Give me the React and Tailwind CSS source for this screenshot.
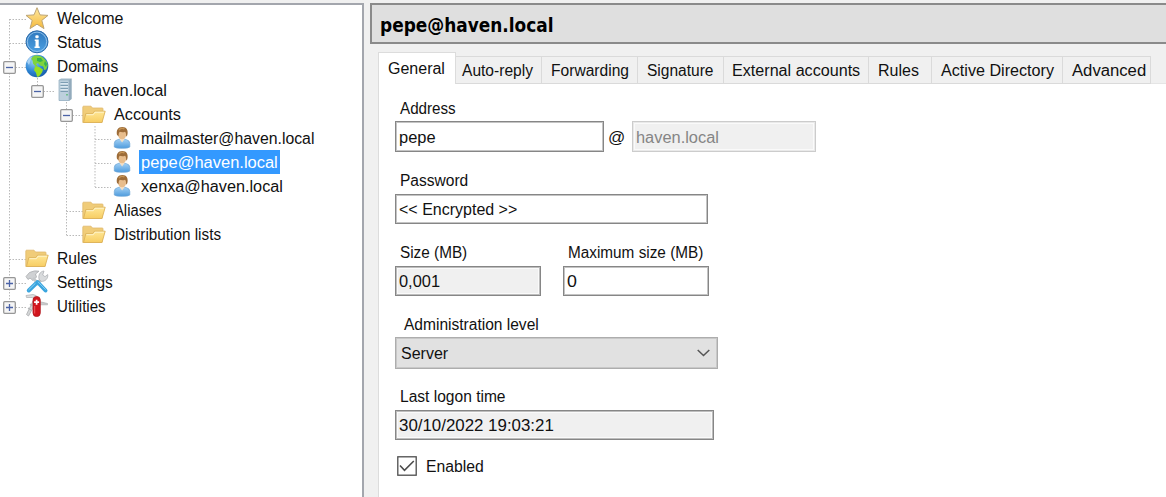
import React, { useLayoutEffect, useRef, useState } from "react";

// Text condensed or widened to a given width
function Fit({ w, children, className = "" }) {
  const ref = useRef(null);
  const [scale, setScale] = useState(1);
  useLayoutEffect(() => {
    setScale(w / ref.current.offsetWidth);
  }, [w]);
  return (
    <span className="block shrink-0" style={{ width: w }}>
      <span
        ref={ref}
        className={"inline-block origin-left whitespace-pre " + className}
        style={{ transform: `translateY(1px) scaleX(${scale})` }}
      >
        {children}
      </span>
    </span>
  );
}

const Star = () => (
  <svg viewBox="0 0 24 24" className="size-6">
    <defs>
      <linearGradient id="star" x1="0" y1="0" x2="0" y2="1">
        <stop offset="0" stopColor="#ffe9a0" />
        <stop offset="1" stopColor="#f4b93c" />
      </linearGradient>
    </defs>
    <path d="M12 1.700l3 7.200 8 .5-6.200 5 2.200 8.200L12 18.200 5 22.600l2.200-8.200-6.200-5 8-.5z" fill="url(#star)" stroke="#bda474" strokeWidth="1" strokeLinejoin="round" />
  </svg>
);

const Info = () => (
  <svg viewBox="0 0 24 24" className="size-6">
    <defs>
      <linearGradient id="info" x1="0" y1="0" x2="0" y2="1">
        <stop offset="0" stopColor="#2f78bd" />
        <stop offset="1" stopColor="#4ba0e3" />
      </linearGradient>
    </defs>
    <circle cx="12" cy="11.800" r="11" fill="url(#info)" stroke="#2d6cab" strokeWidth="1" />
    <circle cx="12" cy="11.800" r="9.700" fill="none" stroke="#8fc0ea" strokeWidth="1" />
    <rect x="10.300" y="5.300" width="3.400" height="3" rx="1.200" fill="#fff" />
    <path d="M9.700 9.500h4v7h1v1.500H9.500v-1.500h1v-5.500h-.8z" fill="#fff" />
  </svg>
);

const Globe = () => (
  <svg viewBox="0 0 24 24" className="size-6">
    <defs>
      <radialGradient id="globe" cx=".35" cy=".3" r=".8">
        <stop offset="0" stopColor="#9ccdf5" />
        <stop offset=".55" stopColor="#2d86d5" />
        <stop offset="1" stopColor="#1557a4" />
      </radialGradient>
    </defs>
    <circle cx="12" cy="12" r="11.300" fill="url(#globe)" />
    <path d="M9 1.800c3-1 7 0 9 1.700 3 2.500 4.500 5 4.700 8l-1.500 4-2 .500-1-3.500-3-1-2.200-2.500-2 1 1.500 2 .500 1-2.500-.5-2.500-3-.5-3L6 4.500z" fill="#7fd43c" />
    <path d="M10 12.500l4 .500 4 2.500-1 3-3 4-2 .300-1-4-2-2.500z" fill="#98df20" />
    <path d="M12 4l4 0 2 3-3 1-3-1z" fill="#37b34c" />
    <path d="M20 7l2 3-1 3-2-3z" fill="#35ae55" />
    <path d="M2 8c1-3 3-5 5-5.500L5 8l-1 3z" fill="#b9dcf7" opacity=".8" />
  </svg>
);

const Server = () => (
  <svg viewBox="0 0 24 24" className="size-6">
    <path d="M6 2l2-1.500h10.500v20.500l-2 1.700H6z" fill="#a4bccb" />
    <path d="M6 2h10v20.500H6z" fill="#bdd0dd" />
    <path d="M16 2l2.500-1.500v20.500L16 22.500z" fill="#93abbc" />
    <path d="M7.500 4.500h7.500M7.500 7.500h7.500M7.500 10.500h7.500M7.500 13.500h7.500" stroke="#7d9db3" strokeWidth="1.200" />
    <path d="M7.500 5.700h7.500M7.500 8.700h7.500M7.500 11.700h7.500" stroke="#e2edf4" strokeWidth="1" />
    <rect x="13" y="16" width="2" height="1.500" fill="#6fbf8c" />
    <path d="M6 2h10v20.500H6z" fill="none" stroke="#9bb3c4" strokeWidth=".8" />
  </svg>
);

const Folder = () => (
  <svg viewBox="0 0 24 24" className="size-6">
    <defs>
      <linearGradient id="folder" x1="0" y1="0" x2="0" y2="1">
        <stop offset="0" stopColor="#ffe795" />
        <stop offset="1" stopColor="#f7cd63" />
      </linearGradient>
    </defs>
    <path d="M.8 20.500V5q0-.8.8-.8h7.400l1.500 1.800h9.700q.8 0 .8.800V10l-1 10.500z" fill="#f0cc79" stroke="#dfb96c" strokeWidth=".8" />
    <path d="M1.500 20.500L3.800 11.700h7l1.700-2.500h10.700L20 20.500z" fill="url(#folder)" stroke="#dcb25a" strokeWidth=".9" strokeLinejoin="round" />
    <path d="M4.400 12.700h6.900l1.700-2.500h8.900" fill="none" stroke="#fff6d2" strokeWidth=".9" />
  </svg>
);

const Person = () => (
  <svg viewBox="0 0 24 24" className="size-6">
    <defs>
      <linearGradient id="shirt" x1="0" y1="0" x2="0" y2="1">
        <stop offset="0" stopColor="#a5d2f5" />
        <stop offset="1" stopColor="#4e9bdd" />
      </linearGradient>
    </defs>
    <path d="M4.300 21V17.500q0-3 3.200-3.800L10 13h4l2.500.7q3.300.8 3.300 3.800V21q-1 1.300-7.700 1.300T4.300 21z" fill="url(#shirt)" stroke="#6ba5d5" strokeWidth=".7" />
    <path d="M9.500 13l2.600 3.500 2.600-3.500-.7-2h-3.800z" fill="#f4dfc5" />
    <ellipse cx="12.100" cy="8" rx="4.300" ry="5.300" fill="#e8bd8c" />
    <path d="M7 9C6 4 8 1 12.300 1s6.300 3.500 5 8.300l-1.300 1.500c.3-2.500 0-4-1-5-2 .9-4 .5-5.300 0-1 1.200-1.200 2.500-1 4.500z" fill="#9d6c38" />
    <path d="M9 4.300c1-2 4-2.500 5.500-1.300" fill="none" stroke="#c69555" strokeWidth="1.200" />
  </svg>
);

const Tools = () => (
  <svg viewBox="0 0 24 24" className="size-6">
    <path d="M11 14.500L17 9" stroke="#c3c6c9" strokeWidth="3.600" />
    <path d="M14.200 9.500c-1.200-4 .5-8 4.800-8.500l-1.300 4 2.300 1.700 2.700-2.200c.8 4-2.700 7.300-6.300 6.800z" fill="#d9dbdd" stroke="#b0b3b6" strokeWidth=".8" />
    <path d="M1 6.500L4.500 2.500q5-2.500 9.500-1.300L10.500 4l1 3L8 10.500 5 8 3 9.500z" fill="#cfd1d3" stroke="#a9acaf" strokeWidth=".8" />
    <path d="M8 8l4 4.500" stroke="#c5c8ca" strokeWidth="3" />
    <path d="M3.800 20.500L11 13.500" stroke="#3aa5de" strokeWidth="4" strokeLinecap="round" />
    <path d="M3.500 20L10.500 13.200" stroke="#8ed2f4" strokeWidth="1" />
    <path d="M12.500 12l8 8.500" stroke="#3aa5de" strokeWidth="4" strokeLinecap="round" />
    <path d="M13 11.800l7.700 8" stroke="#83cdf4" strokeWidth="1" />
  </svg>
);

const Knife = () => (
  <svg viewBox="0 0 24 24" className="size-6">
    <path d="M1 1.500L8 .5q4 .5 5 3.500l-2.500 2L7 3.500H1.500z" fill="#dcdedf" stroke="#b3b5b7" strokeWidth=".8" />
    <path d="M8 7L1.500 20.500l2 1.500L8.500 13z" fill="#d5d7d8" stroke="#a9abad" strokeWidth=".8" />
    <path d="M3 14l3 2M5 10l2 2" stroke="#b4b6b8" strokeWidth="1.200" />
    <path d="M14 7.500l8.500 2v1.300H14z" fill="#cacccd" stroke="#aeb0b2" strokeWidth=".7" />
    <rect x="8" y="2.500" width="7.300" height="20" rx="3.600" fill="#d2151d" stroke="#ae1a20" strokeWidth=".8" />
    <path d="M9.700 12v7.500" stroke="#ef5c60" strokeWidth="1" />
    <path d="M11.600 5.700v5M9.100 8.200h5" stroke="#fff" strokeWidth="1.700" />
  </svg>
);

const Toggle = ({ kind }) => (
  <svg viewBox="0 0 13 13" className="relative top-[1px] size-[13px] shrink-0">
    {kind && (
      <>
        <rect x=".7" y=".7" width="11.600" height="11.600" rx="1" fill="#f5f5f5" stroke="#979797" strokeWidth="1.300" />
        <path d={kind === "plus" ? "M3 6.500h7M6.500 3v7" : "M3 6.500h7"} stroke="#4b63a7" strokeWidth="1.300" />
      </>
    )}
  </svg>
);

const rows = [
  { t: "Welcome", w: 66, I: Star, pad: "pl-[3px]", label: "ml-[7px]" },
  { t: "Status", w: 44, I: Info, pad: "pl-[3px]", label: "ml-[7px]" },
  { t: "Domains", w: 61, I: Globe, pad: "pl-[3px]", label: "ml-[7px]", k: "minus" },
  { t: "haven.local", w: 83, I: Server, pad: "pl-[31px]", label: "ml-[6px]", k: "minus" },
  { t: "Accounts", w: 67, I: Folder, pad: "pl-[60px]", label: "ml-[7px]", k: "minus" },
  { t: "mailmaster@haven.local", w: 173, I: Person, pad: "pl-[88px]", label: "ml-[6px]" },
  { t: "pepe@haven.local", w: 137, I: Person, pad: "pl-[88px]", label: "ml-[5px] bg-[#3399ff] text-white", sel: true },
  { t: "xenxa@haven.local", w: 142, I: Person, pad: "pl-[88px]", label: "ml-[6px]" },
  { t: "Aliases", w: 48, I: Folder, pad: "pl-[60px]", label: "ml-[7px]" },
  { t: "Distribution lists", w: 107, I: Folder, pad: "pl-[60px]", label: "ml-[7px]" },
  { t: "Rules", w: 40, I: Folder, pad: "pl-[3px]", label: "ml-[7px]" },
  { t: "Settings", w: 56, I: Tools, pad: "pl-[3px]", label: "ml-[7px]", k: "plus" },
  { t: "Utilities", w: 49, I: Knife, pad: "pl-[3px]", label: "ml-[7px]", k: "plus" },
];

const tabs = [
  { t: "Auto-reply", w: 71, c: "w-[86px] pl-[6px]" },
  { t: "Forwarding", w: 78, c: "w-[96px] pl-[9px]" },
  { t: "Signature", w: 67, c: "w-[86px] pl-[9px]" },
  { t: "External accounts", w: 128, c: "w-[145px] pl-[8px]" },
  { t: "Rules", w: 41, c: "w-[63px] pl-[9px]" },
  { t: "Active Directory", w: 113, c: "w-[131px] pl-[9px]" },
  { t: "Advanced", w: 74, c: "w-[88px] pl-[9px]" },
];

function Tree() {
  return (
    <nav className="relative mt-[3px] h-[494px] w-[364px] shrink-0 border-t-2 border-r-2 border-[#a3a6ad] bg-white pt-[1px]">
      <svg viewBox="0 0 140 320" className="absolute top-[-5px] left-0 h-[320px] w-[140px]" fill="none" stroke="#b9b9b9" strokeDasharray="1.500 1.500">
        <path d="M9.500 19V307M9.500 19.500H26M9.500 43.500H26M9.500 67.500H26M9.500 259.500H26M9.500 283.500H26M9.500 307.500H26" />
        <path d="M37.500 78V91M37.500 91.500H54M66.500 102V235M66.500 115.500H83M66.500 211.500H83M66.500 235.500H83" />
        <path d="M95 126V187M95 139.500H111M95 163.500H111M95 187.500H111" />
      </svg>
      {rows.map(({ t, w, I, pad, label, k, sel }) => (
        <div key={t} className={"relative flex h-6 items-center " + pad}>
          <Toggle kind={k} />
          <span className="ml-[9px] size-6 shrink-0"><I /></span>
          <span className={"flex h-6 items-center " + label + (sel ? " px-[2px]" : " pl-px")}>
            <Fit w={w}>{t}</Fit>
          </span>
        </div>
      ))}
    </nav>
  );
}

const box = "flex items-center border border-[#868686] pl-[3px]";
const soft = " shadow-[inset_0_0_0_1px_#c4c4c4]";
const softReadOnly = " shadow-[inset_0_0_0_1px_#bdbdbd,inset_0_0_0_2px_#fafafa]";

export default function App() {
  return (
    <div className="flex h-[497px] w-[1166px] overflow-hidden bg-[#f0f0f0] font-['Liberation_Sans',sans-serif] text-[16px] leading-6 text-[#111]">
      <Tree />
      <main className="flex min-w-0 grow flex-col pt-[3px] pl-[6px]">
        <header className="flex h-[41px] shrink-0 items-center border-2 border-r-0 border-[#8a8a8a] bg-[#dfdfdf] pl-[8px] font-['DejaVu_Sans',sans-serif] text-[19px] font-bold text-black">
          <div className="pt-px"><Fit w={174}>pepe@haven.local</Fit></div>
        </header>
        <div className="ml-[8px] flex h-[40px] shrink-0 items-end">
          <div className="flex h-[32px] w-[78px] shrink-0 border border-b-0 border-[#dcdcdc] bg-white pl-[9px] pt-[3px]">
            <Fit w={57}>General</Fit>
          </div>
          {tabs.map(({ t, w, c }) => (
            <div key={t} className={"flex h-[28px] shrink-0 items-center border-y border-r border-[#dadada] " + c}>
              <Fit w={w}>{t}</Fit>
            </div>
          ))}
          <div className="h-px grow bg-[#e5e5e5]" />
        </div>
        <section className="ml-[8px] flex grow flex-col items-start border-l border-[#dcdcdc] bg-white pt-[12px] pl-[16px]">
          <div className="pl-[5px]"><Fit w={56}>Address</Fit></div>
          <div className="mt-[1px] flex h-[31px] items-center">
            <div className={box + soft + " h-[31px] w-[209px] bg-white"}><Fit w={37}>pepe</Fit></div>
            <div className="ml-[4px]"><Fit w={17}>@</Fit></div>
            <div className="ml-[7px] flex h-[31px] w-[184px] items-center border border-[#cccccc] bg-[#f0f0f0] pl-[3px] text-[#858585] shadow-[inset_0_0_0_1px_#e9e9e9,inset_0_0_0_2px_#fafafa]">
              <Fit w={83}>haven.local</Fit>
            </div>
          </div>
          <div className="mt-[16px] pl-[5px]"><Fit w={68}>Password</Fit></div>
          <div className={box + soft + " mt-[2px] h-[30px] w-[313px] bg-white"}><Fit w={118}>{"<< Encrypted >>"}</Fit></div>
          <div className="mt-[16px] flex">
            <div className="w-[168px] pl-[5px]"><Fit w={67}>Size (MB)</Fit></div>
            <div className="pl-[5px]"><Fit w={135}>Maximum size (MB)</Fit></div>
          </div>
          <div className="mt-[2px] flex gap-[22px]">
            <div className={box + softReadOnly + " h-[30px] w-[146px] bg-[#f0f0f0]"}><Fit w={41}>0,001</Fit></div>
            <div className={box + soft + " h-[30px] w-[146px] bg-white"}><Fit w={10}>0</Fit></div>
          </div>
          <div className="mt-[16px] pl-[9px]"><Fit w={135}>Administration level</Fit></div>
          <div className="mt-[1px] flex h-[32px] w-[323px] items-center justify-between border border-[#adadad] bg-[#e1e1e1] pr-[7px] pl-[5px] shadow-[inset_0_0_0_1px_#c8c8c8]">
            <Fit w={47}>Server</Fit>
            <svg viewBox="0 0 13 8" className="h-[8px] w-[13px]" fill="none" stroke="#555" strokeWidth="1.500"><path d="M.7 1l5.800 5.500L12.300 1" /></svg>
          </div>
          <div className="mt-[15px] pl-[5px]"><Fit w={106}>Last logon time</Fit></div>
          <div className={box + softReadOnly + " mt-[2px] h-[30px] w-[319px] bg-[#f0f0f0]"}><Fit w={155}>30/10/2022 19:03:21</Fit></div>
          <div className="mt-[14px] flex items-center pl-[2px]">
            <svg viewBox="0 0 20 20" className="size-[20px]" fill="none" stroke="#4c4c4c"><rect x=".8" y=".8" width="18.400" height="18.400" strokeWidth="1.300" /><path d="M3 9.500l4.500 4.800L16.800 5" strokeWidth="1.600" /></svg>
            <div className="ml-[9px]"><Fit w={58}>Enabled</Fit></div>
          </div>
        </section>
      </main>
    </div>
  );
}
